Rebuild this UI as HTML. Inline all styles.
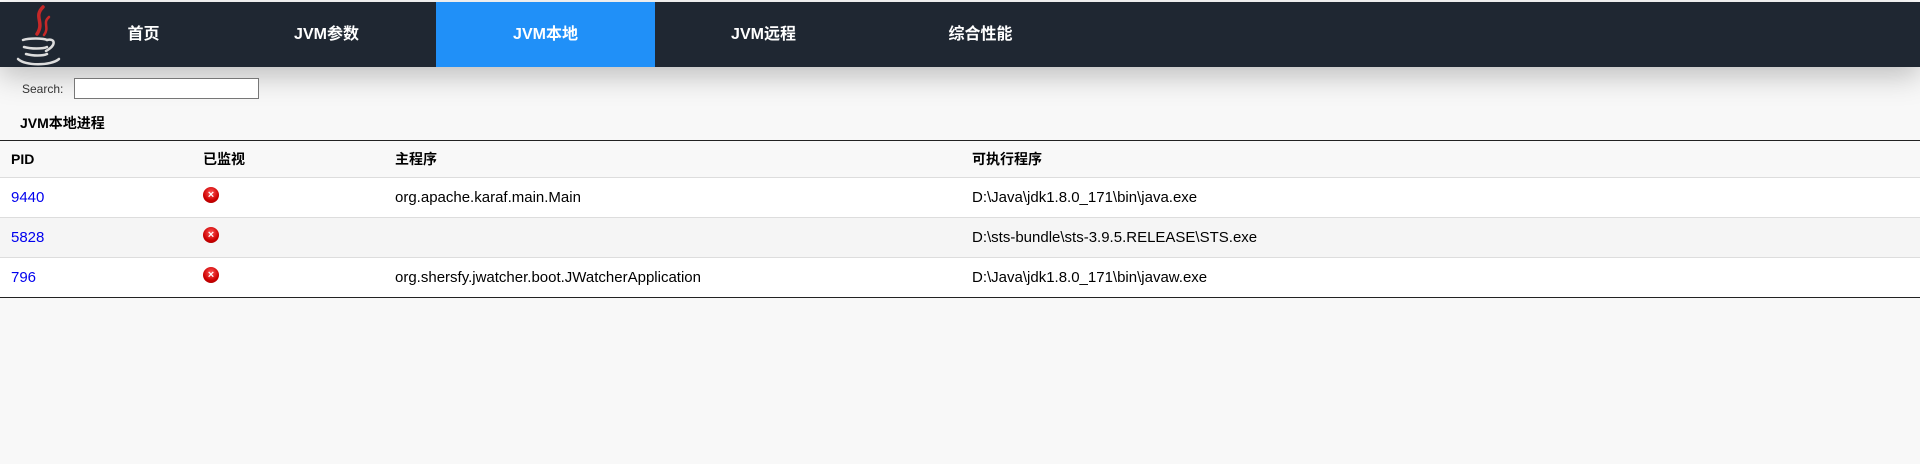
<!DOCTYPE html>
<html><head><meta charset="utf-8"><style>
*{margin:0;padding:0;box-sizing:border-box}
body{width:1920px;height:464px;background:#f8f8f8;font-family:"Liberation Sans","Noto Sans CJK SC",sans-serif;overflow:hidden;position:relative}
.top{position:absolute;top:0;left:0;width:1920px;height:2px;background:#fff}
.nav{position:absolute;top:2px;left:0;width:1920px;height:65px;background:#1f2732;box-shadow:0 8px 30px rgba(0,0,0,.25)}
.tab{position:absolute;top:0;height:65px;width:219px;color:#fff;font-weight:bold;font-size:16px;line-height:65px;text-align:center}
.logo{position:absolute;left:13px;top:1px}
.search{position:absolute;left:22px;top:82px;font-size:12px;color:#333}
.search input{position:absolute;left:52px;top:-4px;width:185px;height:21px;border:1px solid #777;background:#fff}
h3{position:absolute;left:20px;top:113px;font-size:14px;font-weight:bold;color:#000}
table{position:absolute;top:140px;left:0;width:1920px;border-collapse:collapse;border-top:1px solid #222;border-bottom:1px solid #222;font-size:15px}
td,th{text-align:left;padding:0 0 0 11px;height:40px;vertical-align:middle}
th{height:37px;font-weight:bold;font-size:14px;background:#f8f8f8}
tr.r td{border-top:1px solid #ddd}
tr.w td{background:#fff}tr.g td{background:#f5f5f5}
a{color:#0000ee;text-decoration:none}
.ic{display:inline-block;width:16px;height:16px;border-radius:50%;background:radial-gradient(circle at 50% 35%,#f55,#c00 60%,#900);color:#fff;font-size:11px;font-weight:bold;line-height:16px;text-align:center;position:relative;top:-4px}
</style></head><body>
<div class="top"></div>
<div class="nav">
<svg class="logo" width="50" height="64" viewBox="0 0 50 64">
<g fill="none" stroke="#c62828" stroke-linecap="round">
<path d="M30 4 C20 14 32 19 24 31" stroke-width="3.5"/>
<path d="M36 14 C29 20 37 24 31 32" stroke-width="2.5"/>
</g>
<g fill="none" stroke="#ddd" stroke-width="2.5" stroke-linecap="round">
<path d="M10 37 C16 35 30 35 34 37"/>
<path d="M11 44 C18 46 30 46 34 44"/>
<path d="M34 37 C42 35 44 42 33 48"/>
<path d="M13 51 C20 53 30 53 34 51"/>
<path d="M5 56 C12 63 38 63 46 56"/>
</g></svg>
<div class="tab" style="left:34px">首页</div>
<div class="tab" style="left:217px">JVM参数</div>
<div class="tab" style="left:436px;background:#2090f8">JVM本地</div>
<div class="tab" style="left:654px">JVM远程</div>
<div class="tab" style="left:871px">综合性能</div>
</div>
<div class="search">Search: <input></div>
<h3>JVM本地进程</h3>
<table>
<colgroup><col style="width:192px"><col style="width:192px"><col style="width:577px"><col></colgroup>
<tr><th>PID</th><th>已监视</th><th>主程序</th><th>可执行程序</th></tr>
<tr class="r w"><td><a>9440</a></td><td><span class="ic">×</span></td><td>org.apache.karaf.main.Main</td><td>D:\Java\jdk1.8.0_171\bin\java.exe</td></tr>
<tr class="r g"><td><a>5828</a></td><td><span class="ic">×</span></td><td></td><td>D:\sts-bundle\sts-3.9.5.RELEASE\STS.exe</td></tr>
<tr class="r w"><td><a>796</a></td><td><span class="ic">×</span></td><td>org.shersfy.jwatcher.boot.JWatcherApplication</td><td>D:\Java\jdk1.8.0_171\bin\javaw.exe</td></tr>
</table>
</body></html>
